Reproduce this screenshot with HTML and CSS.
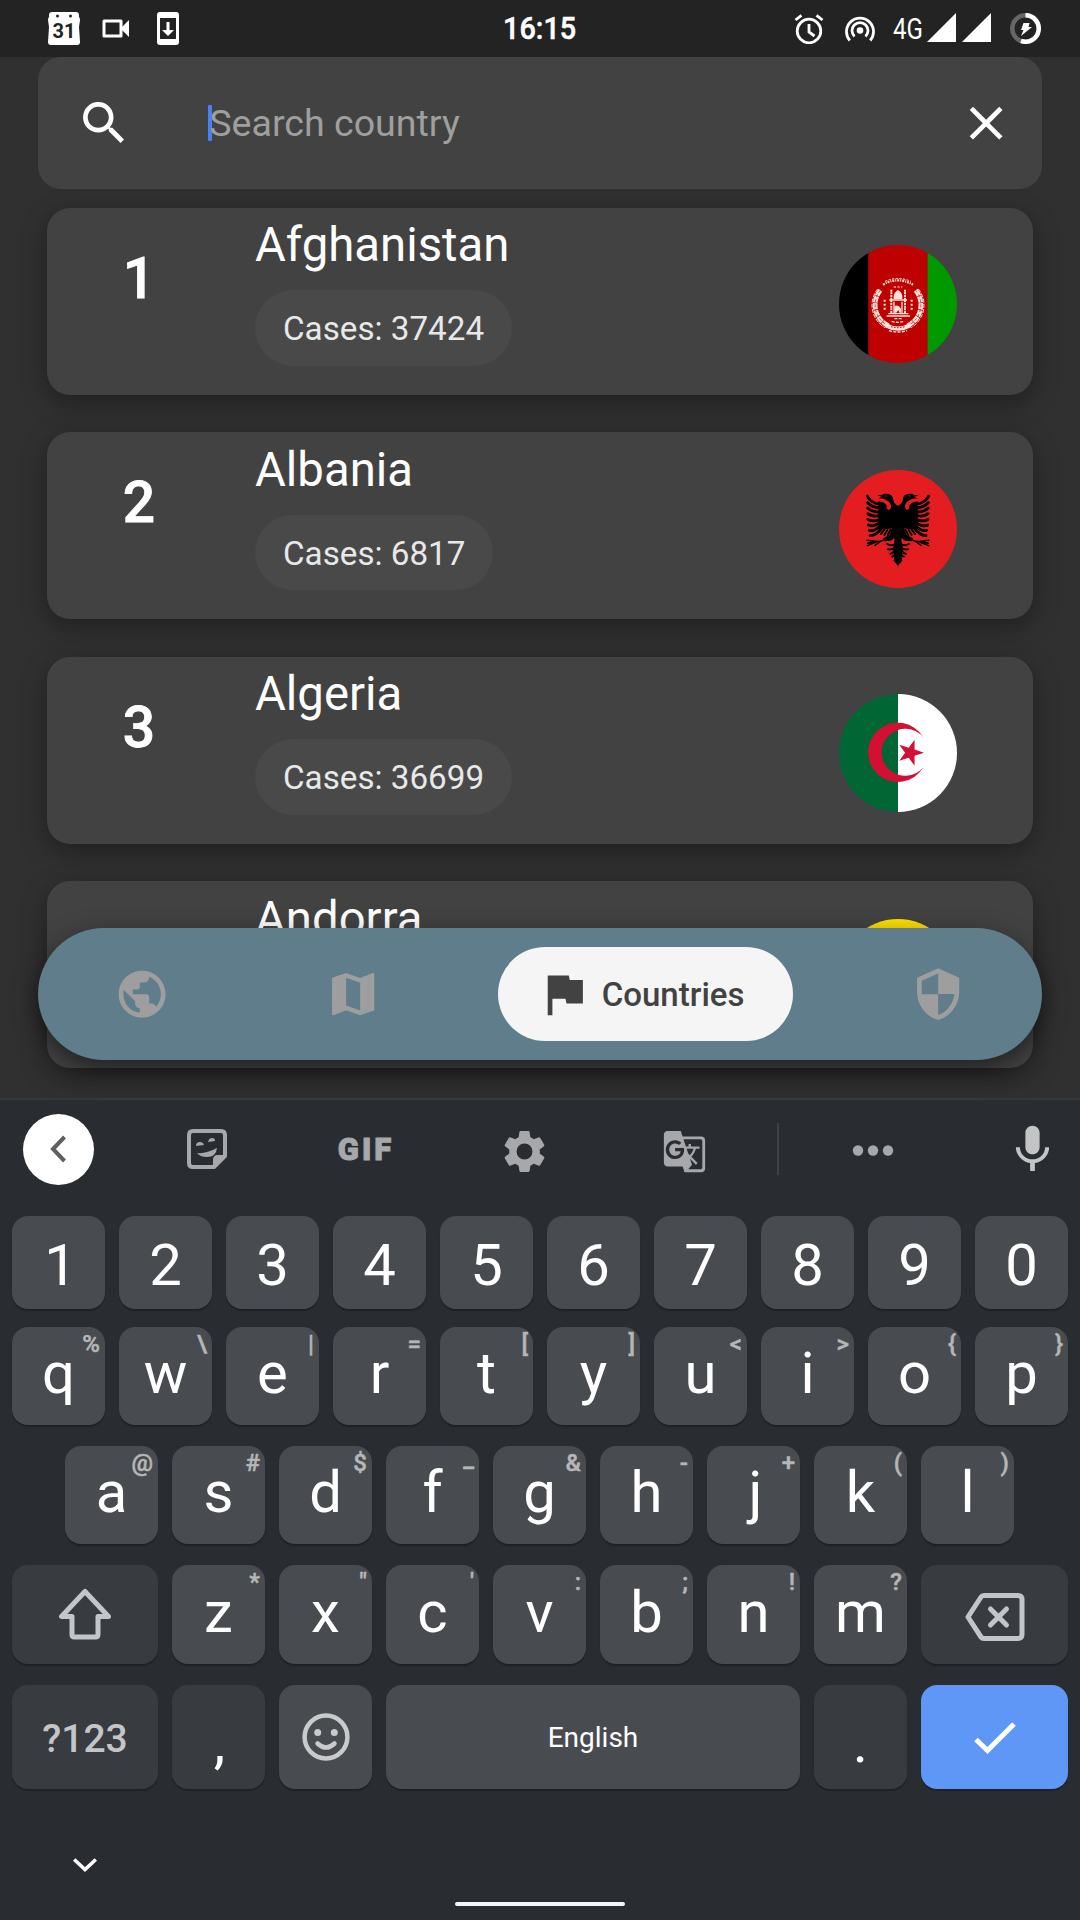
FILE: index.html
```html
<!DOCTYPE html>
<html lang="en">
<head>
<meta charset="utf-8">
<title>Countries</title>
<link rel="stylesheet" href="styles.css">
</head>
<body>
<div class="screen">
  <header class="status">
    <div class="status-left">
      <svg class="ic-cal" viewBox="0 0 32 33"><path fill="#fff" d="M4 0h24q3 0 3 3v2q1 1 1 3l-1 7 1 15q0 3-3 3H3q-3 0-3-3l1-15-1-7q0-2 1-3V3q0-3 3-3z"/><circle cx="9.500" cy="4" r="1.500" fill="#232323"/><circle cx="22.500" cy="4" r="1.500" fill="#232323"/><text x="16" y="26" text-anchor="middle" class="cal-text">31</text></svg>
      <svg class="ic-vid" viewBox="0 0 28 19"><path fill="none" stroke="#fff" stroke-width="3" stroke-linejoin="round" d="M2 2h17v15H2z"/><path fill="#fff" d="M20 8l7-7v17l-7-7z"/></svg>
      <svg class="ic-phone" viewBox="0 0 22 33"><rect width="22" height="33" rx="3" fill="#fff"/><path fill="#232323" d="M3 6h16v21H3z"/><path fill="#fff" d="M9.500 10h3v8H17l-6 6-6-6h4.500z"/></svg>
    </div>
    <div class="clock">16:15</div>
    <div class="status-right">
      <svg class="ic-alarm" viewBox="0 0 30 30"><g fill="none" stroke="#fff" stroke-width="2.800"><circle cx="15" cy="17" r="11.800"/><path d="M15 10v8l5.500 4M1.500 6l6-4.700M28.500 6l-6-4.700"/></g></svg>
      <svg class="ic-hot" viewBox="0 0 30 28"><g fill="none" stroke="#fff" stroke-width="2.800"><path d="M4.800 25.500a13.500 13.500 0 1 1 20.400 0"/><path d="M9.500 21.500a8 8 0 1 1 11 0"/></g><circle cx="15" cy="15.500" r="3.300" fill="#fff"/></svg>
      <span class="net">4G</span>
      <svg class="ic-sig" viewBox="0 0 29 29"><path fill="#fff" d="M29 0v29H0z"/></svg>
      <svg class="ic-sig second" viewBox="0 0 29 29"><path fill="#fff" d="M29 0v29H0z"/></svg>
      <svg class="ic-bat" viewBox="0 0 31 31"><g fill="none" stroke-width="4.500"><circle cx="15.500" cy="15.500" r="13.200" stroke="#666"/><path stroke="#fff" d="M15.500 2.300a13.200 13.200 0 1 1-4.500 25.600"/></g><path fill="#fff" d="M13.500 10h6l-1 4h3.500l-11 9 2.500-6H11z"/></svg>
    </div>
  </header>

  <div class="search">
    <svg class="ic" viewBox="0 0 24 24"><path fill="#fff" d="M15.500 14h-.79l-.28-.27A6.471 6.471 0 0 0 16 9.500 6.500 6.500 0 1 0 9.500 16c1.610 0 3.090-.59 4.230-1.570l.27.28v.79l5 4.990L20.490 19l-4.990-5zm-6 0C7.010 14 5 11.990 5 9.500S7.010 5 9.500 5 14 7.010 14 9.500 11.990 14 9.500 14z"/></svg>
    <div class="field"><span class="caret"></span><span class="hint">Search country</span></div>
    <svg class="ic" viewBox="0 0 24 24"><path fill="#fff" d="M19 6.410L17.590 5 12 10.590 6.410 5 5 6.410 10.590 12 5 17.590 6.410 19 12 13.410 17.590 19 19 17.590 13.410 12z"/></svg>
  </div>

  <main class="list">
    <article class="card">
      <div class="num">1</div>
      <div class="info"><div class="name">Afghanistan</div><div class="chip">Cases: 37424</div></div>
      <svg class="flag" viewBox="0 0 354 354">
        <path fill="#000" d="M0 0h89v354H0z"/><path fill="#bf0000" d="M88 0h178v354H88z"/><path fill="#009900" d="M266 0h88v354h-88z"/>
        <g fill="none" stroke="#fbe3dc">
          <path stroke-width="14" stroke-dasharray="19 2" d="M124 136a69 69 0 0 0 26 107M230 136a69 69 0 0 1-26 107"/>
          <path stroke-width="3" stroke-dasharray="12 4" d="M116 132a78 78 0 0 0 22 116M238 132a78 78 0 0 1-22 116"/>
          <path stroke="#bf0000" stroke-width="2" stroke-dasharray="9 6" d="M124 136a69 69 0 0 0 26 107M230 136a69 69 0 0 1-26 107"/>
          <path stroke-width="7" stroke-dasharray="6 3 3 3" d="M132 119q45-26 90 0"/>
          <path stroke-width="3" stroke-dasharray="7 4" d="M164 126h26M138 109q39-17 78 0"/>
          <path stroke-width="13" d="M141 241q36 20 72 0"/>
          <path stroke-width="4" stroke-dasharray="9 4" d="M150 257q27 8 54 0M158 229q19 6 38 0M166 221h22"/>
          <path stroke-width="6" stroke-dasharray="6 2" d="M157 134v72M198 134v72"/>
          <path stroke-width="4" d="M151 165h53M148 206h60M143 213h70M165 204v-34M189 204v-34"/>
          <path stroke-width="6" stroke-dasharray="6 6" d="M137 164v34M218 164v34"/>
        </g>
        <path fill="#fbe3dc" d="M164 162v-9q2-12 13-18 11 6 13 18v9zM166 183q13-5 20 8v12h-5l-3-8-6 8h-6z"/>
        <path fill="none" stroke="#bf0000" stroke-width="3" stroke-dasharray="5 4" d="M156 245q20 6 42 0"/>
      </svg>
    </article>
    <article class="card">
      <div class="num">2</div>
      <div class="info"><div class="name">Albania</div><div class="chip">Cases: 6817</div></div>
      <svg class="flag" viewBox="0 0 354 354">
        <path fill="#e41e20" d="M0 0h354v354H0z"/>
        <g id="eagle-half">
          <path d="M178 108C168 104 162 96 162 84 158 70 138 69 128 75L114 76 130 81 117 85C135 84 158 94 156 112 154 124 140 120 143 108 140 98 128 96 118 94V170C136 180 150 178 158 174L152 194 132 205 134 214 156 212 166 204C168 216 164 222 162 238L166 262 164 272 177 287 178 287z"/>
          <g fill="none" stroke="#000" stroke-width="8.500" stroke-linecap="round">
            <path d="M122 103Q94 98 85 78M122 114Q97 112 86 98M122 126Q98 126 86 114M122 137Q98 141 87 131M122 149Q99 157 87 148M122 159Q100 172 88 165M124 168Q106 185 91 181M130 172Q112 197 93 197"/>
            <path stroke-width="6" d="M136 178l-10 14M145 180l-9 15M154 180l-8 16M166 224q-12 4-22-2M166 233q-8 7-19 5M167 242q-6 8-13 9M169 252q-4 6-9 8"/>
            <path stroke-width="4.500" d="M138 208q-14 9-30 6l-24-3M112 216l-27 11M106 215l-20 5M122 216l-14 10"/>
          </g>
          <path stroke="#e41e20" stroke-width="2" d="M138 78h7"/>
        </g>
        <use href="#eagle-half" transform="matrix(-1 0 0 1 354 0)"/>
      </svg>
    </article>
    <article class="card">
      <div class="num">3</div>
      <div class="info"><div class="name">Algeria</div><div class="chip">Cases: 36699</div></div>
      <svg class="flag" viewBox="0 0 354 354">
        <path fill="#006633" d="M0 0h177v354H0z"/><path fill="#fff" d="M177 0h177v354H177z"/>
        <path fill="#d21034" d="M253 130A89 89 0 1 0 253 220 70.600 70.600 0 1 1 253 130zM255 176L226.700 185.200 226.700 215 209.100 191 180.800 200.100 198.300 176 180.800 151.900 209.100 161.100 226.700 137 226.700 166.800z"/>
      </svg>
    </article>
    <article class="card">
      <div class="num">4</div>
      <div class="info"><div class="name">Andorra</div><div class="chip">Cases: 1005</div></div>
      <svg class="flag" viewBox="0 0 354 354"><path fill="#0018a8" d="M0 0h89v354H0z"/><path fill="#fedf00" d="M70 0h214v354H70z"/><path fill="#d0103a" d="M284 0h70v354h-70z"/></svg>
    </article>
  </main>

  <nav class="nav">
    <span class="nav-item"><svg class="ic" viewBox="0 0 24 24"><path fill="#9e9e9e" d="M12 2C6.480 2 2 6.480 2 12s4.480 10 10 10 10-4.480 10-10S17.520 2 12 2zm-1 17.930c-3.950-.49-7-3.850-7-7.930 0-.62.08-1.210.21-1.790L9 15v1c0 1.100.9 2 2 2v1.930zm6.900-2.540c-.26-.81-1-1.390-1.900-1.390h-1v-3c0-.55-.45-1-1-1H8v-2h2c.55 0 1-.45 1-1V7h2c1.100 0 2-.9 2-2v-.41c2.930 1.190 5 4.060 5 7.410 0 2.080-.8 3.970-2.100 5.390z"/></svg></span>
    <span class="nav-item map"><svg class="ic" viewBox="0 0 24 24"><path fill="#9e9e9e" d="M20.500 3l-.16.03L15 5.100 9 3 3.360 4.900c-.21.07-.36.25-.36.48V20.500c0 .28.22.5.5.5l.16-.03L9 18.900l6 2.100 5.640-1.900c.21-.07.36-.25.36-.48V3.500c0-.28-.22-.5-.5-.5zM15 19l-6-2.110V5l6 2.110V19z"/></svg></span>
    <span class="nav-item"><span class="pill"><svg class="ic" viewBox="0 0 24 24"><path fill="#424242" d="M14.400 6L14 4H5v17h2v-7h5.600l.4 2h7V6z"/></svg><span class="pill-text">Countries</span></span></span>
    <span class="nav-item last"><svg class="ic" viewBox="0 0 24 24"><path fill="#9e9e9e" d="M12 1L3 5v6c0 5.550 3.840 10.740 9 12 5.160-1.260 9-6.450 9-12V5l-9-4zm0 10.990h7c-.53 4.120-3.280 7.790-7 8.940V12H5V6.300l7-3.110v8.800z"/></svg></span>
  </nav>

  <section class="keyboard">
    <div class="tools">
      <span class="tool"><span class="back"><svg width="17" height="28" viewBox="0 0 17 28"><path fill="none" stroke="#5f6062" stroke-width="4" d="M14.500 2L3 14l11.500 12"/></svg></span></span>
      <span class="tool"><svg width="40" height="40" viewBox="0 0 40 40"><path fill="none" stroke="#a6a8ab" stroke-width="4" stroke-linejoin="round" d="M6 2h28q4 0 4 4v21L27 38H6q-4 0-4-4V6q0-4 4-4z"/><path fill="#a6a8ab" d="M26 39V31q0-5 5-5h8zM10 24q9 1 20-5-1 9-10 9-7 0-10-4zM9 17q0-4 4-4 3 0 4 3zM21 13q1-4 4-4 3 0 3 3z"/></svg></span>
      <span class="tool gif">GIF</span>
      <span class="tool low"><svg width="49" height="49" viewBox="0 0 24 24"><path fill="#a6a8ab" d="M19.430 12.980c.04-.32.07-.64.07-.98s-.03-.66-.07-.98l2.110-1.650c.19-.15.24-.42.12-.64l-2-3.460c-.12-.22-.39-.3-.61-.22l-2.490 1c-.52-.4-1.080-.73-1.690-.98l-.38-2.650C14.460 2.180 14.250 2 14 2h-4c-.25 0-.46.18-.49.42l-.38 2.650c-.61.25-1.170.59-1.690.98l-2.490-1c-.23-.09-.49 0-.61.22l-2 3.460c-.13.22-.07.49.12.64l2.110 1.650c-.04.32-.07.65-.07.98s.03.66.07.98l-2.110 1.650c-.19.15-.24.42-.12.64l2 3.460c.12.22.39.3.61.22l2.490-1c.52.4 1.080.73 1.690.98l.38 2.650c.03.24.24.42.49.42h4c.25 0 .46-.18.49-.42l.38-2.650c.61-.25 1.170-.59 1.690-.98l2.490 1c.23.09.49 0 .61-.22l2-3.460c.12-.22.07-.49-.12-.64l-2.110-1.650zM12 15.900a3.900 3.900 0 1 1 0-7.800 3.900 3.900 0 0 1 0 7.800z"/></svg></span>
      <span class="tool low"><svg width="45" height="45" viewBox="0 0 24 24"><path fill="#a6a8ab" d="M21 4H11l-1-3H3c-1.100 0-2 .9-2 2v15c0 1.100.9 2 2 2h8l1 3h9c1.100 0 2-.9 2-2V6c0-1.100-.9-2-2-2zM7 16c-2.760 0-5-2.240-5-5s2.240-5 5-5c1.350 0 2.480.5 3.350 1.300L9.030 8.570c-.38-.36-1.040-.78-2.030-.78-1.740 0-3.150 1.440-3.150 3.210S5.260 14.210 7 14.210c2.010 0 2.840-1.440 2.920-2.410H7v-1.710h4.680c.07.31.12.61.12 1.020C11.800 13.970 9.890 16 7 16zm6.170-5.420h3.700c-.43 1.250-1.110 2.430-2.050 3.470-.31-.35-.6-.72-.86-1.100l-.79-2.370zm8.330 9.920c0 .55-.45 1-1 1H14l2-2.500-1.040-3.100 3.100 3.100.92-.92-3.300-3.250.02-.02c1.130-1.250 1.930-2.690 2.400-4.220H20v-1.300h-4.530V8h-1.290v1.290h-1.440L11.460 5.500h9.040c.55 0 1 .45 1 1v14z"/></svg></span>
      <span class="tool"><span class="divider"></span></span>
      <span class="tool dots"><svg width="42" height="12" viewBox="0 0 42 12"><g fill="#a6a8ab"><circle cx="6" cy="6.500" r="5.200"/><circle cx="21" cy="6.500" r="5.200"/><circle cx="36" cy="6.500" r="5.200"/></g></svg></span>
      <span class="tool mic"><svg width="57" height="57" viewBox="0 0 24 24"><path fill="#c3c4c6" d="M12 14c1.660 0 2.990-1.340 2.990-3L15 5c0-1.660-1.340-3-3-3S9 3.340 9 5v6c0 1.660 1.340 3 3 3zm5.300-3c0 3-2.540 5.100-5.300 5.100S6.700 14 6.700 11H5c0 3.410 2.720 6.230 6 6.720V21h2v-3.280c3.280-.48 6-3.300 6-6.720h-1.700z"/></svg></span>
    </div>

    <div class="row r1">
      <div class="key one">1</div><div class="key">2</div><div class="key">3</div><div class="key">4</div><div class="key">5</div><div class="key">6</div><div class="key">7</div><div class="key">8</div><div class="key">9</div><div class="key">0</div>
    </div>
    <div class="row r2">
      <div class="key">q<sup>%</sup></div><div class="key">w<sup>\</sup></div><div class="key">e<sup>|</sup></div><div class="key">r<sup>=</sup></div><div class="key">t<sup>[</sup></div><div class="key">y<sup>]</sup></div><div class="key">u<sup>&lt;</sup></div><div class="key">i<sup>&gt;</sup></div><div class="key">o<sup>{</sup></div><div class="key">p<sup>}</sup></div>
    </div>
    <div class="row r3">
      <div class="key">a<sup>@</sup></div><div class="key">s<sup>#</sup></div><div class="key">d<sup>$</sup></div><div class="key">f<sup class="up">_</sup></div><div class="key">g<sup>&amp;</sup></div><div class="key">h<sup>-</sup></div><div class="key j">j<sup>+</sup></div><div class="key">k<sup>(</sup></div><div class="key">l<sup>)</sup></div>
    </div>
    <div class="row r4">
      <div class="key dark wide"><svg width="54" height="52" viewBox="0 0 54 52"><path fill="none" stroke="#c3c5c8" stroke-width="5" stroke-linejoin="round" d="M27 3.500L3.500 28.500H14v18q0 2.500 2.500 2.500h21q2.500 0 2.500-2.500v-18h10.500z"/></svg></div>
      <div class="key">z<sup>*</sup></div><div class="key">x<sup>"</sup></div><div class="key">c<sup>'</sup></div><div class="key">v<sup>:</sup></div><div class="key">b<sup>;</sup></div><div class="key">n<sup>!</sup></div><div class="key">m<sup>?</sup></div>
      <div class="key dark wide"><svg class="bksp" width="60" height="48" viewBox="0 0 60 48"><path fill="none" stroke="#c3c5c8" stroke-width="5" stroke-linejoin="round" d="M19 2.500h34q4 0 4 4v35q0 4-4 4H19q-2 0-3-1.500L3 24 16 4q1-1.500 3-1.500z"/><path fill="none" stroke="#c3c5c8" stroke-width="5" stroke-linecap="round" d="M25.500 16l16 16M41.500 16l-16 16"/></svg></div>
    </div>
    <div class="row r5">
      <div class="key dark wide sym">?123</div>
      <div class="key dark comma">,</div>
      <div class="key"><svg width="48" height="48" viewBox="0 0 48 48"><g fill="none" stroke="#c8cacc" stroke-width="4.500"><circle cx="24" cy="24" r="21.400"/><path stroke-linecap="round" d="M15.500 30.500q8.500 8 17 0"/></g><g fill="#c8cacc"><circle cx="15.700" cy="19.500" r="3.500"/><circle cx="32.300" cy="19.500" r="3.500"/></g></svg></div>
      <div class="key space">English</div>
      <div class="key dark">.</div>
      <div class="key wide enter"><svg width="42" height="32" viewBox="0 0 42 32"><path fill="none" stroke="#fff" stroke-width="5" d="M2 17.500L13.500 28.500 40 2"/></svg></div>
    </div>

    <div class="sysnav">
      <svg class="down" width="24" height="14" viewBox="0 0 24 14"><path fill="none" stroke="#fff" stroke-width="3.500" d="M1.200 1.500L12 11.500 22.800 1.500"/></svg>
      <span class="home"></span>
    </div>
  </section>
</div>
</body>
</html>
```
FILE: styles.css
```css
* { box-sizing: border-box; }
body { margin: 0; background: #303030; font-family: Roboto, sans-serif; }
svg { display: block; flex: none; }

.screen {
  position: relative;
  display: flex;
  flex-direction: column;
  width: 1080px;
  height: 1920px;
  overflow: hidden;
  color: #fff;
}
.ic { width: 56.25px; height: 56.25px; }

/* status bar */
.status {
  display: grid;
  grid-template-columns: 1fr auto 1fr;
  height: 57px;
  flex: none;
  background: #232323;
}
.status-left { display: flex; align-items: center; padding-left: 48px; gap: 22px; }
.ic-cal { width: 32px; height: 33px; }
.ic-vid { width: 28px; height: 19px; }
.ic-phone { width: 22px; height: 33px; margin-left: 5px; }
.cal-text { font: 700 20px Roboto, sans-serif; fill: #232323; }
.clock { font-weight: 500; font-size: 32px; line-height: 57px; -webkit-text-stroke: .5px #fff; transform: scaleX(.9); }
.status-right { display: flex; align-items: center; justify-content: flex-end; padding-right: 39px; }
.ic-alarm { width: 30px; height: 30px; margin-right: 21px; }
.ic-hot { width: 30px; height: 28px; margin-right: 18px; }
.net {
  width: 30px;
  margin-right: 4px;
  font-size: 29px;
  line-height: 56px;
  transform: scaleX(.83);
  transform-origin: left;
}
.ic-sig { width: 29px; height: 29px; margin-top: -2px; }
.second { margin-left: 6px; margin-right: 19px; }
.ic-bat { width: 31px; height: 31px; }

/* search */
.search {
  display: flex;
  align-items: center;
  flex: none;
  height: 132px;
  margin: 0 38px;
  padding: 0 28px 0 38px;
  border-radius: 23px;
  background: #424242;
}
.field { display: flex; align-items: center; flex: 1; padding-left: 76px; }
.caret { width: 4px; height: 36px; margin-right: -3px; border-radius: 1px; background: #4a80f0; }
.hint { font-size: 37.600px; line-height: 44px; color: #9f9f9f; }

/* countries */
.list {
  display: flex;
  flex-direction: column;
  gap: 37.500px;
  height: 909px;
  flex: none;
  padding: 18.800px 47.500px 0 47px;
  overflow: hidden;
}
.card {
  display: flex;
  align-items: flex-start;
  flex: none;
  height: 187px;
  padding-right: 75.500px;
  border-radius: 23px;
  background: #424242;
  box-shadow: 0 8px 26px rgba(0, 0, 0, .34);
}
.num { width: 184px; padding-top: 36px; font-size: 57px; font-weight: 500; line-height: 70px; text-align: center; -webkit-text-stroke: .8px #fff; }
.info { flex: 1; padding: 10.500px 0 0 23.500px; }
.name { padding-left: .5px; font-size: 47.300px; line-height: 55px; }
.chip {
  width: fit-content;
  height: 75.500px;
  margin-top: 17px;
  padding: 0 28px 0 28.500px;
  border-radius: 38px;
  background: #494949;
  font-size: 33.200px;
  line-height: 78px;
  color: #e8e8e8;
}
.flag { width: 118px; height: 118px; margin-top: 37.500px; border-radius: 50%; }

/* floating navigation */
.nav {
  position: absolute;
  left: 38px;
  top: 928px;
  display: grid;
  grid-template-columns: 208px 213px 372px 1fr;
  width: 1004px;
  height: 132px;
  border-radius: 66px;
  background: #607d8b;
  box-shadow: 0 8px 24px rgba(0, 0, 0, .5);
}
.nav-item { display: flex; align-items: center; justify-content: center; }
.map { padding-left: 1px; }
.last { padding-left: 4px; }
.pill { display: flex; align-items: center; width: 295px; height: 94px; padding-left: 38.500px; border-radius: 47px; background: #f5f5f5; }
.pill-text { margin-left: 9.500px; font-size: 33px; font-weight: 500; line-height: 94px; padding-top: 2px; color: #424242; }

/* keyboard */
.keyboard { position: relative; flex: 1; border-top: 2px solid #35393c; background: #292c31; }
.tools { display: grid; grid-template-columns: 117px 179px 137px 183px 136px 52px 138px 1fr; height: 98px; }
.tool { display: flex; align-items: center; justify-content: center; }
.low { padding-top: 4px; }
.dots { padding-top: 2px; }
.mic { padding-left: 43px; padding-top: 1px; }
.back { display: flex; align-items: center; justify-content: center; width: 71px; height: 71px; border-radius: 50%; background: #fff; }
.gif { font: 900 31px Roboto, sans-serif; letter-spacing: 3px; color: #a6a8ab; padding: 1px 0 0 3px; -webkit-text-stroke: 1px #a6a8ab; }
.divider { width: 2px; height: 52px; background: #3e4145; }

.row { display: flex; gap: 14px; padding: 0 12px; }
.r1 { margin-top: 18px; height: 93px; line-height: 98px; }
.r2 { margin-top: 18px; height: 98px; line-height: 92px; }
.r3 { margin-top: 21px; height: 98px; line-height: 92px; padding: 0 65px; }
.r4 { margin-top: 21px; height: 99px; line-height: 94px; }
.r5 { margin-top: 21px; height: 104px; line-height: 114px; }
.key {
  position: relative;
  flex: 0 0 93px;
  border-radius: 16px;
  background: #484b4f;
  box-shadow: 0 2px 1px rgba(0, 0, 0, .25);
  font-size: 58px;
  text-align: center;
}
.key.one { text-indent: 4px; }
.key.comma { text-indent: 2px; }
.key.j { text-indent: 4px; }
.key svg { margin: 28px auto 0; }
.key sup {
  position: absolute;
  top: 0;
  right: 5px;
  font-size: 24px;
  font-weight: 500;
  line-height: 34px;
  vertical-align: baseline;
  text-indent: 0;
  color: #b4b6b8;
  -webkit-text-stroke: .5px #b4b6b8;
}
.key sup.up { top: -4px; }
.dark { background: #383b3f; }
.row .key.wide { flex: 0 0 146px; }
.row .key.wide:last-child { flex: 1; }
.r4 svg { margin-top: 23px; }
.r4 .bksp { margin-top: 28px; }
.sym { font-size: 39px; font-weight: 500; line-height: 108px; color: #c3c5c8; }
.r5 .key.space { flex: 0 0 414px; font-size: 28px; line-height: 106px; }
.enter { background: #5e97f6; }
.key.enter svg { margin-top: 37px; }

.sysnav { display: flex; flex-direction: column; height: 131px; padding: 69px 0 0; }
.down { margin-left: 73px; }
.home { width: 170px; height: 4px; margin: 30px auto 0; border-radius: 2px; background: #f4f6f6; }
```
